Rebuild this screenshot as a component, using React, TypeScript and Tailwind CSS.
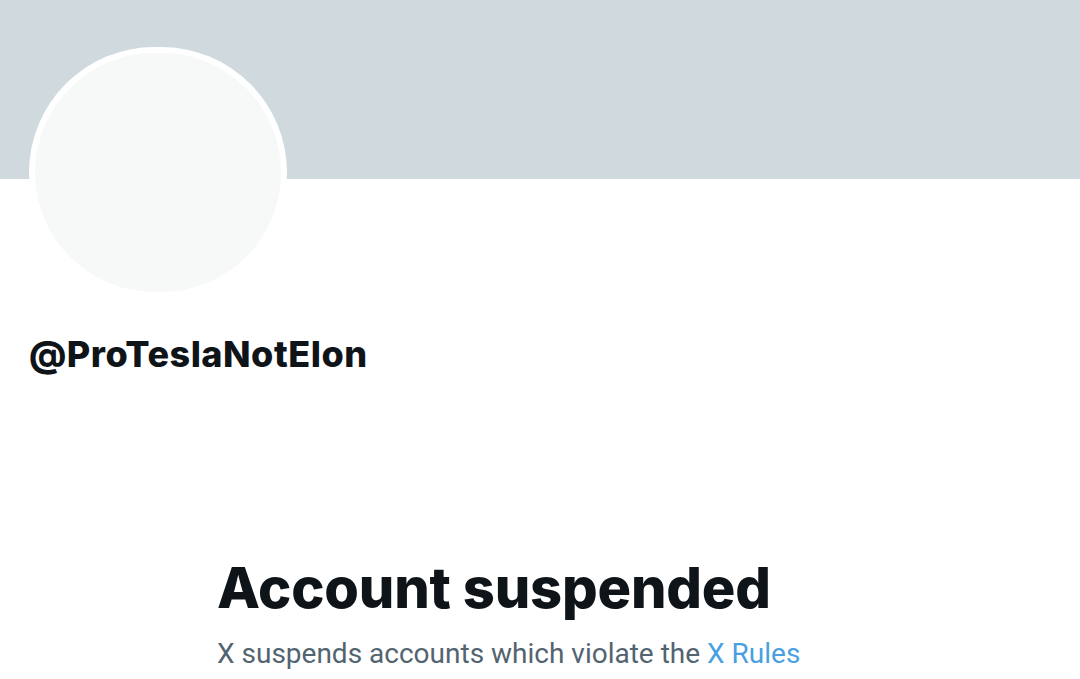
import React from "react";

export default function App() {
  return (
    <div className="w-[1080px] h-[679px] overflow-hidden bg-white" style={{ fontFamily: "Inter, 'Liberation Sans', sans-serif" }}>
      <div className="h-[179px] bg-[#cfd9de]" />
      <div className="pl-[29px] -mt-[132px]">
        <div className="w-[258px] h-[251px] rounded-full bg-white p-[6px]">
          <div className="w-full h-full rounded-full bg-[#f7f9f9]" />
        </div>
      </div>
      <div className="pl-[29px] mt-[34px] text-[36px] font-extrabold leading-[44px] text-[#0f1419] tracking-[0.5px]">
        @ProTeslaNotElon
      </div>
      <div className="pl-[217px] mt-[180px]">
        <div className="text-[56px] font-extrabold leading-[64px] text-[#0f1419] tracking-[-0.2px]">
          Account suspended
        </div>
        <div
          className="mt-[16px] text-[28px] leading-[36px] text-[#536471]"
          style={{ fontFamily: "Roboto, 'Liberation Sans', sans-serif" }}
        >
          X suspends accounts which violate the <span className="text-[#4a9fe0]">X Rules</span>
        </div>
      </div>
    </div>
  );
}
